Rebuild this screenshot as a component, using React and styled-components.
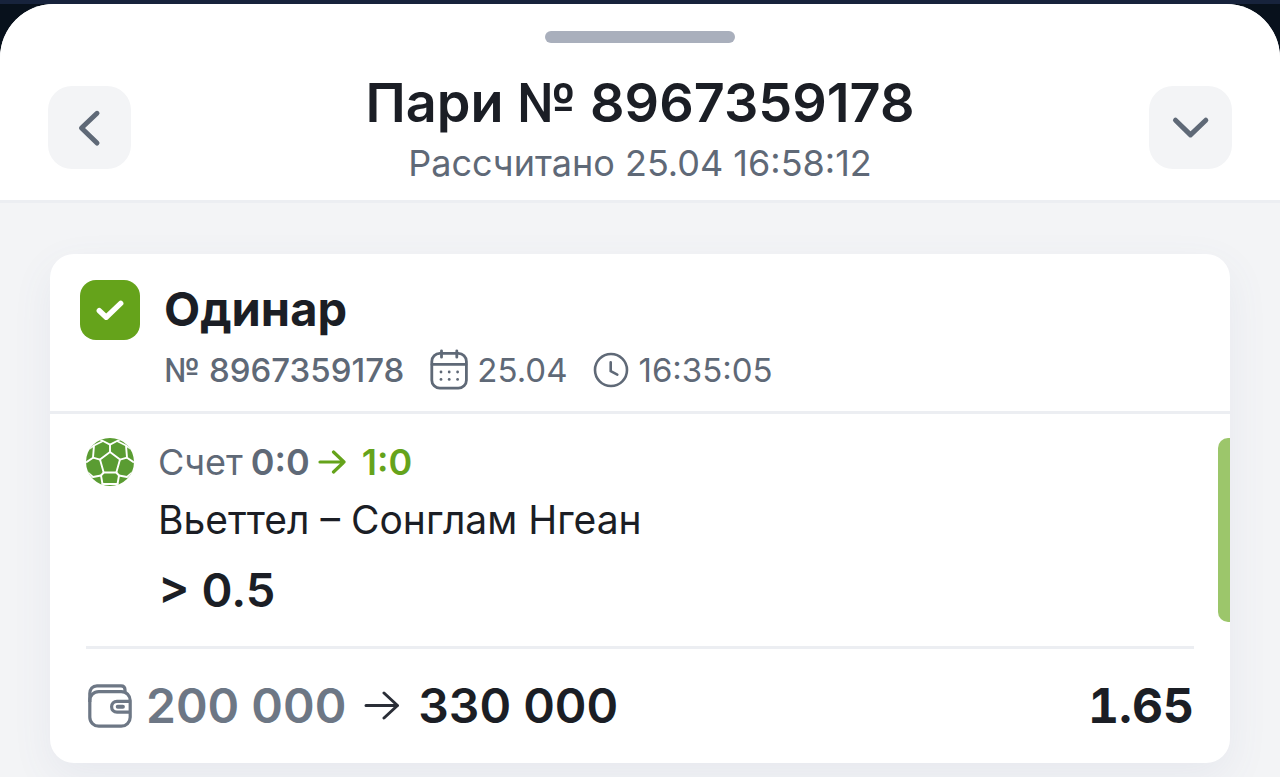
import React from 'react';
import styled, { createGlobalStyle } from 'styled-components';

const GlobalStyle = createGlobalStyle`
* {
  box-sizing: border-box;
}
body {
  margin: 0;
  background: #f3f4f6;
  font-family: Inter, "Noto Sans", sans-serif;
  color: #1b1e25;
}
h1, h2, p {
  margin: 0;
}
`;

const bet = {
  number: '8967359178',
  settledAt: '25.04 16:58:12',
  type: 'Одинар',
  date: '25.04',
  time: '16:35:05',
  match: 'Вьеттел – Сонглам Нгеан',
  pick: '> 0.5',
  scoreFrom: '0:0',
  scoreTo: '1:0',
  stake: '200 000',
  payout: '330 000',
  odds: '1.65',
};

const ChevronIcon = ({ d }) => (
  <svg width="41" height="41" viewBox="0 0 41 41" fill="none" stroke="#5f6977" strokeWidth="5" strokeLinecap="round" strokeLinejoin="round" aria-hidden="true">
    <path d={d} />
  </svg>
);

const CheckIcon = () => (
  <svg width="60" height="60" viewBox="0 0 60 60" fill="none" stroke="#fff" strokeWidth="5.4" strokeLinecap="round" strokeLinejoin="round" aria-hidden="true">
    <path d="M19.300 30.700l6.900 6.500L40.700 23.400" />
  </svg>
);

const CalendarIcon = () => (
  <svg width="38" height="42" viewBox="0 0 38 42" fill="none" stroke="#5f6977" strokeWidth="2.8" strokeLinecap="round" aria-hidden="true">
    <rect x="1.8" y="4.4" width="34.6" height="34.8" rx="8" />
    <path d="M2 15.400h34M11.500 1.800v6.400M26.800 1.800v6.400" />
    <g fill="#5f6977" stroke="none">
      <circle cx="11" cy="23" r="1.4" />
      <circle cx="19.2" cy="23" r="1.4" />
      <circle cx="27.6" cy="23" r="1.4" />
      <circle cx="11" cy="30.4" r="1.4" />
      <circle cx="19.2" cy="30.4" r="1.4" />
      <circle cx="27.6" cy="30.4" r="1.4" />
    </g>
  </svg>
);

const ClockIcon = () => (
  <svg width="36" height="36" viewBox="0 0 36 36" fill="none" stroke="#5f6977" strokeWidth="2.6" strokeLinecap="round" strokeLinejoin="round" aria-hidden="true">
    <circle cx="18" cy="18" r="16" />
    <path d="M17.700 10.300v8.900l6.600 3.400" />
  </svg>
);

const BallIcon = () => (
  <svg width="48" height="48" viewBox="0 0 48 48" aria-hidden="true">
    <clipPath id="ball">
      <circle cx="24" cy="24" r="24" />
    </clipPath>
    <g clipPath="url(#ball)">
      <rect width="48" height="48" fill="#5a9c32" />
      <g fill="none" stroke="#fff" strokeWidth="1.9" strokeLinejoin="round">
        <path d="M24 14l10 7.600-3.700 12.900H17.700L14 21.600z" />
        <path d="M24 14V6.600M34 21.600l7-1.900M30.300 34.500l2.700 3M17.700 34.500l-2.700 3M14 21.600l-7-1.900" />
        <path d="M14 1.500l3 1.500 7 3.600L31 3l3-1.500M17 3L8 7.500 7 19.700 0 24.500M31 3l9 4.500 1 12.200 7 4.800" />
        <path d="M0 33l7 6 8-1.500 1.500 8.500h15l1.500-8.500 8 1.500 7-6" />
        <path d="M8 7.500L3 11M40 7.500L45 11M16.500 46l-2 2M31.500 46l2 2" />
      </g>
    </g>
  </svg>
);

const WalletIcon = () => (
  <svg width="48" height="44" viewBox="-2 0 48 44" fill="none" stroke="#6d7785" strokeWidth="3.2" strokeLinejoin="round" aria-hidden="true">
    <rect x="1.8" y="7.6" width="40.4" height="34.6" rx="9" />
    <path d="M1.800 18V9.500C1.800 5 4.500 1.800 9 1.800h24c2.400 0 4 1.600 4 4V9" />
    <path d="M42 17.400H29c-3.200 0-5.400 2.200-5.400 5.400s2.200 5.400 5.400 5.400h13" />
    <rect x="28.800" y="21.900" width="7" height="1.800" rx="0.900" strokeWidth="2.200" />
  </svg>
);

const ScoreArrow = () => (
  <svg width="28" height="26" viewBox="0 0 28 26" fill="none" stroke="#65a31b" strokeWidth="3.2" strokeLinecap="round" strokeLinejoin="round" aria-hidden="true">
    <path d="M2 13h24M15.500 3l10.500 10-10.500 10" />
  </svg>
);

const PayoutArrow = () => (
  <svg width="36" height="30" viewBox="0 0 36 30" fill="none" stroke="#2a2e37" strokeWidth="3" strokeLinecap="round" strokeLinejoin="round" aria-hidden="true">
    <path d="M2 14.500h31.500M20 2L33.500 14.500 20 27" />
  </svg>
);

const App = () => {
    return (
        <Backdrop>
            <GlobalStyle />
            <Sheet>
                <Handle />
                <SheetHeader>
                    <IconButton type="button" aria-label="Назад">
                        <ChevronIcon d="M28 6.300L12.500 21 28 36" />
                    </IconButton>
                    <Heading>
                        <Title>Пари № {bet.number}</Title>
                        <Subtitle>Рассчитано {bet.settledAt}</Subtitle>
                    </Heading>
                    <IconButton type="button" aria-label="Свернуть">
                        <ChevronIcon d="M5.500 13.200L20.500 27.900 35.800 13.200" />
                    </IconButton>
                </SheetHeader>
                <Content>
                    <Card>
                        <CardHeader>
                            <Badge><CheckIcon /></Badge>
                            <div>
                                <CardTitle>{bet.type}</CardTitle>
                                <Meta>
                                    <MetaItem $strong>№ {bet.number}</MetaItem>
                                    <MetaItem><CalendarIcon />{bet.date}</MetaItem>
                                    <MetaItem><ClockIcon />{bet.time}</MetaItem>
                                </Meta>
                            </div>
                        </CardHeader>
                        <Event>
                            <BallIcon />
                            <EventInfo>
                                <Score>
                                    <span>Счет</span>
                                    <b>{bet.scoreFrom}</b>
                                    <ScoreArrow />
                                    <Result>{bet.scoreTo}</Result>
                                </Score>
                                <Match>{bet.match}</Match>
                                <Pick>{bet.pick}</Pick>
                            </EventInfo>
                            <StatusBar />
                        </Event>
                        <Totals>
                            <Stake>
                                <WalletIcon />
                                <Amount $muted>{bet.stake}</Amount>
                            </Stake>
                            <PayoutArrow />
                            <Amount>{bet.payout}</Amount>
                            <Odds>{bet.odds}</Odds>
                        </Totals>
                    </Card>
                </Content>
            </Sheet>
        </Backdrop>
    );
};

export default App;

const Backdrop = styled.div`
background: #08111c;
border-top: 4px solid #17233c;
`;

const Sheet = styled.main`
display: flex;
flex-direction: column;
min-height: calc(100vh - 4px);
overflow: hidden;
border-radius: 54px 54px 0 0;
background: #f3f4f6;
`;

const Handle = styled.div`
padding-top: 27px;
background: #fff;
&::after {
  content: "";
  display: block;
  width: 190px;
  height: 12px;
  margin: 0 auto;
  border-radius: 6px;
  background: #a9afbc;
}
`;

const SheetHeader = styled.header`
display: flex;
align-items: center;
justify-content: space-between;
padding: 24px 48px 13px;
border-bottom: 3px solid #eceef2;
background: #fff;
`;

const IconButton = styled.button`
display: flex;
align-items: center;
justify-content: center;
width: 83px;
height: 83px;
padding: 0;
border: none;
border-radius: 24px;
background: #f3f4f6;
cursor: pointer;
`;

const Heading = styled.div`
text-align: center;
`;

const Title = styled.h1`
font-size: 54px;
font-weight: 600;
line-height: 72px;
`;

const Subtitle = styled.p`
font-size: 36px;
line-height: 48px;
color: #5f6977;
`;

const Content = styled.section`
flex: 1;
padding: 51px 50px 14px;
`;

const Card = styled.article`
border-radius: 24px;
background: #fff;
box-shadow: 0 14px 40px rgba(90, 105, 150, 0.08);
`;

const CardHeader = styled.div`
display: flex;
align-items: flex-start;
gap: 24px;
padding: 26px 30px 21px;
border-bottom: 3px solid #eceef2;
`;

const Badge = styled.span`
display: flex;
width: 60px;
height: 60px;
border-radius: 16px;
background: #65a31b;
`;

const CardTitle = styled.h2`
font-size: 47px;
font-weight: 700;
line-height: 58px;
`;

const Meta = styled.div`
display: flex;
align-items: center;
gap: 26px;
margin-top: 12px;
`;

const MetaItem = styled.span`
display: flex;
align-items: center;
gap: 9px;
height: 40px;
font-size: 33px;
font-weight: ${({ $strong }) => ($strong ? 500 : 400)};
line-height: 40px;
color: #5f6977;
`;

const Event = styled.div`
display: flex;
align-items: flex-start;
gap: 24px;
padding: 24px 0 0 36px;
`;

const EventInfo = styled.div`
flex: 1;
`;

const Score = styled.div`
display: flex;
align-items: center;
gap: 8px;
font-size: 36px;
line-height: 48px;
color: #5f6977;
b {
  font-weight: 600;
}
`;

const Result = styled.strong`
padding-left: 8px;
font-weight: 600;
color: #65a31b;
`;

const Match = styled.p`
font-size: 39px;
line-height: 68px;
`;

const Pick = styled.p`
font-size: 47px;
font-weight: 600;
line-height: 72px;
`;

const StatusBar = styled.div`
align-self: stretch;
width: 12px;
margin-bottom: 4px;
border-radius: 10px 0 0 10px;
background: #9cc66b;
`;

const Totals = styled.div`
display: flex;
align-items: center;
gap: 18px;
margin: 20px 36px 0;
padding: 27px 0;
border-top: 3px solid #eceef2;
`;

const Stake = styled.div`
display: flex;
align-items: center;
gap: 12px;
`;

const Amount = styled.span`
font-size: 48px;
font-weight: 600;
line-height: 60px;
color: ${({ $muted }) => ($muted ? '#6d7785' : '#1b1e25')};
`;

const Odds = styled.strong`
margin-left: auto;
font-size: 48px;
font-weight: 700;
font-variant-numeric: tabular-nums;
line-height: 60px;
`;
